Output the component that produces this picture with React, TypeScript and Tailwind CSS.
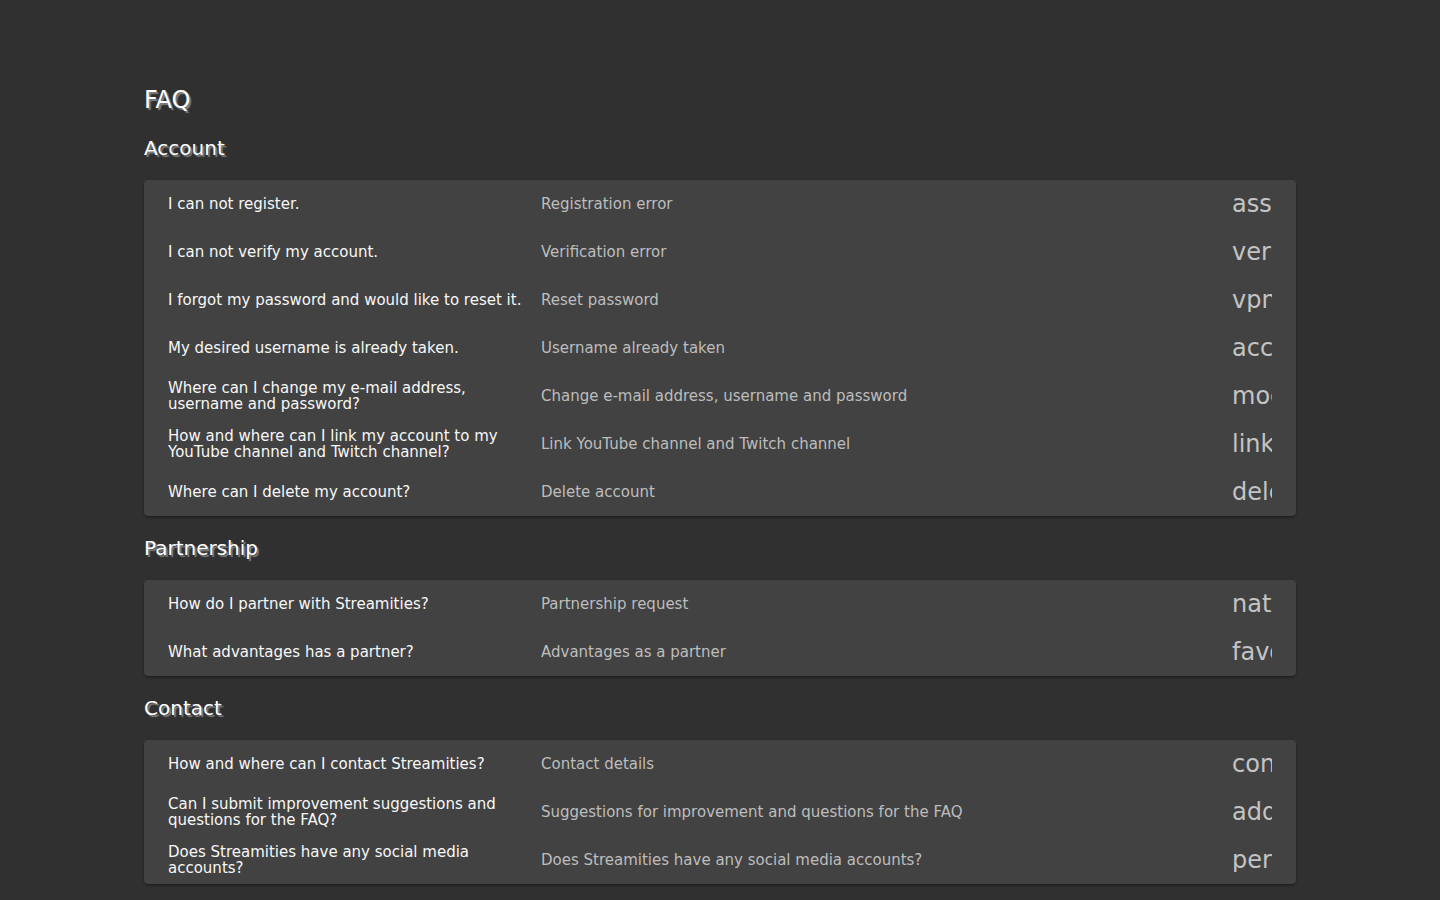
type Item = { q: string; a: string; icon: string }
type Section = { title: string; items: Item[] }

const sections: Section[] = [
  {
    title: 'Account',
    items: [
      { q: 'I can not register.', a: 'Registration error', icon: 'assignment_late' },
      { q: 'I can not verify my account.', a: 'Verification error', icon: 'verified_user' },
      { q: 'I forgot my password and would like to reset it.', a: 'Reset password', icon: 'vpn_key' },
      { q: 'My desired username is already taken.', a: 'Username already taken', icon: 'account_circle' },
      {
        q: 'Where can I change my e-mail address, username and password?',
        a: 'Change e-mail address, username and password',
        icon: 'mode_edit',
      },
      {
        q: 'How and where can I link my account to my YouTube channel and Twitch channel?',
        a: 'Link YouTube channel and Twitch channel',
        icon: 'link',
      },
      { q: 'Where can I delete my account?', a: 'Delete account', icon: 'delete' },
    ],
  },
  {
    title: 'Partnership',
    items: [
      { q: 'How do I partner with Streamities?', a: 'Partnership request', icon: 'nature_people' },
      { q: 'What advantages has a partner?', a: 'Advantages as a partner', icon: 'favorite' },
    ],
  },
  {
    title: 'Contact',
    items: [
      { q: 'How and where can I contact Streamities?', a: 'Contact details', icon: 'contact_mail' },
      {
        q: 'Can I submit improvement suggestions and questions for the FAQ?',
        a: 'Suggestions for improvement and questions for the FAQ',
        icon: 'add_comment',
      },
      {
        q: 'Does Streamities have any social media accounts?',
        a: 'Does Streamities have any social media accounts?',
        icon: 'person',
      },
    ],
  },
]

function Row({ item }: { item: Item }) {
  return (
    <div className="grid h-12 grid-cols-[373px_1fr_40px] items-center px-6">
      <div className="pr-4 text-[15px] leading-4 text-[#f7f7f7]">{item.q}</div>
      <div className="text-[15px] leading-5 text-[#bdbdbd]">{item.a}</div>
      <div className="overflow-hidden whitespace-nowrap text-2xl leading-6 text-[#c4c4c4]">
        {item.icon}
      </div>
    </div>
  )
}

export default function App() {
  return (
    <div
      className="min-h-screen bg-[#303030] pt-[84px] pb-4"
      style={{ fontFamily: '"DejaVu Sans", sans-serif' }}
    >
      <div className="mx-auto w-[1152px]">
        <h1 className="text-2xl leading-8 text-white [text-shadow:2px_2px_1px_#808080]">FAQ</h1>
        {sections.map((s) => (
          <section key={s.title}>
            <h2 className="mt-[18px] mb-[18px] text-xl leading-7 text-white [text-shadow:2px_2px_1px_#808080]">
              {s.title}
            </h2>
            <div className="rounded bg-[#424242] shadow-[0_2px_2px_rgba(0,0,0,0.25),0_0_2px_rgba(0,0,0,0.2)]">
              {s.items.map((it) => (
                <Row key={it.q} item={it} />
              ))}
            </div>
          </section>
        ))}
      </div>
    </div>
  )
}
